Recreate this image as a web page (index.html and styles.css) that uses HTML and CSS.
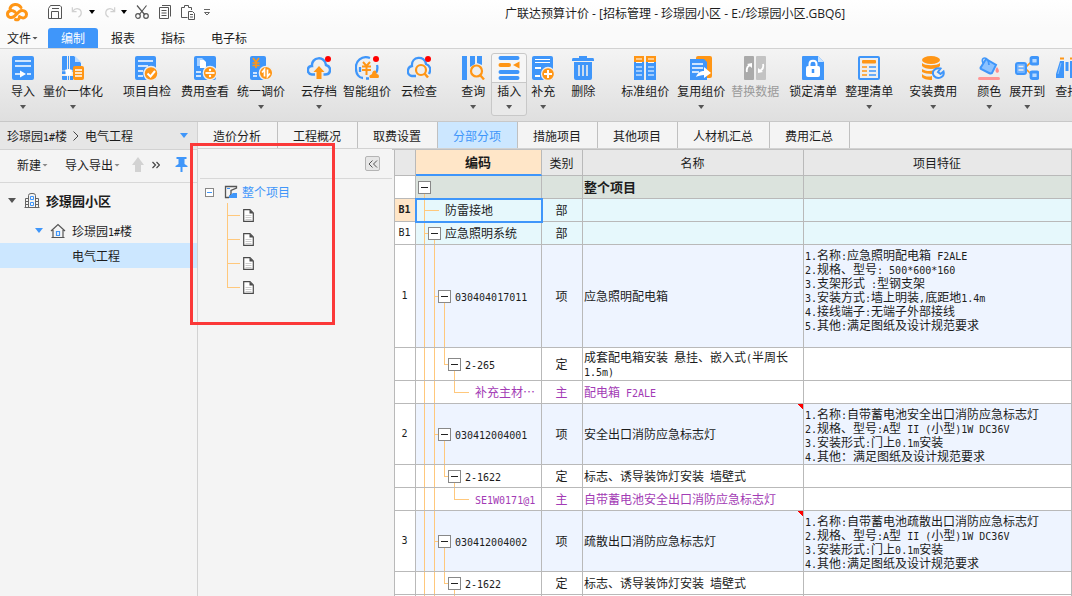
FILE: index.html
```html
<!DOCTYPE html>
<html lang="zh-CN">
<head>
<meta charset="utf-8">
<title>广联达预算计价</title>
<link rel="stylesheet" href="styles.css">
</head>
<body>
<header class="titlebar">
  <svg class="logo" viewBox="0 0 24 20" fill="none" stroke="#ff9616" stroke-width="3" stroke-linecap="round"><path d="M10 10C7 7.500 2.500 8.500 2.500 12C2.500 15.500 6.500 16.500 9 14.500L14.500 9.500C17 7.500 21.500 9 21.500 12.500C21.500 15.500 18.500 16.500 16.500 15.500M5 6.500C6.500 1.500 13 1 16 5.500M10.500 17.500C13 18.500 14.500 17 14.500 14.500"/></svg>
  <div class="quick">
    <button aria-label="保存"><svg viewBox="0 0 16 16" fill="none" stroke="#555"><path d="M1.500 4.500L3.500 1.500H13L14.500 3V14.500H1.500ZM4.500 14V7.500H11.500V14M5 4.500H12"/></svg></button>
    <button class="undo" aria-label="撤销"><svg viewBox="0 0 16 16" fill="none" stroke="#d0d0d0" stroke-width="1.300"><path d="M2.500 3V7.500H7M3 7C6 3 12 4 12 9C12 11 11 12.500 9 13.500"/></svg><i class="caret black"></i></button>
    <button class="undo" aria-label="重做"><svg viewBox="0 0 16 16" fill="none" stroke="#d0d0d0" stroke-width="1.300"><path d="M13.500 3V7.500H9M13 7C10 3 4 4 4 9C4 11 5 12.500 7 13.500"/></svg><i class="caret black"></i></button>
    <button aria-label="剪切"><svg viewBox="0 0 16 16" fill="none" stroke="#555" stroke-width="1.200"><path d="M3 1.500L11 11M12.500 1.500L5 11"/><circle cx="4" cy="12" r="2.300"/><circle cx="12" cy="12" r="2.300"/></svg></button>
    <button aria-label="复制"><svg viewBox="0 0 16 16" fill="none" stroke="#555"><path d="M5 1.500H13.500V12.500M2.500 3.500H11.500V14.500H2.500ZM4.500 6.500H9.500M4.500 9H9.500M4.500 11.500H9.500"/></svg></button>
    <button aria-label="粘贴"><svg viewBox="0 0 16 16" fill="none" stroke="#555"><path d="M7.500 13.500H1.500V3.500H4.500V1.500H8.500V3.500H11.500V6M8.500 7.500H12.500L14.500 9.500V15.500H8.500ZM10 10.500H13M10 13H13"/></svg></button>
    <button aria-label="自定义"><svg class="slim" viewBox="0 0 8 16" fill="none" stroke="#666"><path d="M1 5.500H7M1.500 8.500L4 11L6.500 8.500Z"/></svg></button>
  </div>
  <h1>广联达预算计价 - [招标管理 - 珍璟园小区 - E:/珍璟园小区.GBQ6]</h1>
</header>
<nav class="menu">
  <button class="file">文件<i class="caret tiny"></i></button>
  <button class="on">编制</button>
  <button>报表</button>
  <button>指标</button>
  <button>电子标</button>
</nav>
<div class="ribbon">
  <button class="tool first"><svg viewBox="0 0 24 24"><rect x="1" width="22" height="24" rx="2" fill="#3f96fa"/><path d="M4 5H20M4 10H20M4 18H11M16 18H20" stroke="#fff" stroke-width="1.600"/><path d="M9 14.500L15 18L9 21.500Z" fill="#fff"/></svg><span>导入</span><i class="caret"></i></button>
  <button class="tool"><svg viewBox="0 0 24 24"><path d="M1 1Q1 0 2 0H6V14H1ZM9 0H13L20 7V14H9ZM1 20H6V24H2Q1 24 1 23ZM9 20H12V24H9Z" fill="#3f96fa"/><path d="M14 0L20 6H14Z" fill="#bcdcff"/><rect x="4.500" y="13.500" width="6" height="6" fill="#fff"/><path d="M1 15H4M11 15H13M7.500 0V13M7.500 20V24" stroke="#3f96fa"/><path d="M1 15.500H4.500V18H1Z" fill="#3f96fa"/><rect x="12" y="10" width="11" height="14" rx="2" fill="#ff9616"/><path d="M14 14H21M14 17H21M14 20H21" stroke="#fff" stroke-width="1.300"/></svg><span>量价一体化</span><i class="caret"></i></button>
  <button class="tool g20"><svg viewBox="0 0 24 24"><rect y="0" width="21" height="24" rx="2" fill="#3f96fa"/><path d="M3 5H18M3 10H13M3 15H8M3 20H8" stroke="#fff" stroke-width="1.600"/><circle cx="16" cy="17.500" r="7" fill="#ff9616" stroke="#eee" stroke-width="1.500"/><path d="M12.500 17.500L15.500 20.500L20 15" stroke="#fff" stroke-width="2" fill="none"/></svg><span>项目自检</span></button>
  <button class="tool g10"><svg viewBox="0 0 24 24"><rect x="1" width="22" height="24" rx="2" fill="#3f96fa"/><path d="M4 2H9L11 4V10H4Z" fill="#a9d1ff"/><path d="M7 4H11L13 6V12H7Z" fill="#fff"/><path d="M3 16H8M3 20H8" stroke="#fff" stroke-width="1.600"/><circle cx="17" cy="17" r="6.700" fill="#ff9616" stroke="#eee" stroke-width="1.300"/><path d="M12.500 17H21.500" stroke="#fff" stroke-width="1.800"/><circle cx="17" cy="14" r="1.200" fill="#fff"/><circle cx="17" cy="20" r="1.200" fill="#fff"/></svg><span>费用查看</span></button>
  <button class="tool"><svg viewBox="0 0 24 24"><rect x="1" width="16" height="24" rx="2" fill="#3f96fa"/><path d="M4 2L7 6L10 2M7 6V12M3.500 7H10.500M3.500 9.500H10.500" stroke="#ff9616" stroke-width="1.700" fill="none"/><path d="M4 17H8M4 20H8" stroke="#fff" stroke-width="1.400"/><circle cx="17" cy="17" r="6.700" fill="#ff9616" stroke="#eee" stroke-width="1.300"/><path d="M15.500 20.500V13.500L13 16.500M18.500 13.500V20.500L21 17.500" stroke="#fff" stroke-width="1.700" fill="none"/></svg><span>统一调价</span><i class="caret"></i></button>
  <button class="tool g16"><svg viewBox="0 0 24 24"><path d="M8 18.500H5C-1 17.500 0 10 5 10C4 1 18-1 19 9C25 11 24 18.500 18 18.500H16.500" fill="none" stroke="#3f96fa" stroke-width="2.500"/><path d="M12 10L17.500 16H14.500V23H9.500V16H6.500Z" fill="#ff9616"/><circle cx="21" cy="3" r="3" fill="red"/></svg><span>云存档</span><i class="caret"></i></button>
  <button class="tool g6"><svg viewBox="0 0 24 24"><path d="M15 2C7-1 0 5 1 13C1 18 4 22 8 22M22 9C23 12 22 15 21 17M11 22.500H14M5 11V16" fill="none" stroke="#3f96fa" stroke-width="2.300"/><path d="M7 10.500H16M7 14H16M8 6L11.500 10L15 6M11.500 9V19" stroke="#ff9616" stroke-width="2" fill="none"/><path d="M15 22C13 19 16 19 17 18C18 13 22 14 21.500 18C25 18 24 22 23 22Z" fill="#ff9616"/><circle cx="21" cy="3" r="3" fill="red"/></svg><span>智能组价</span></button>
  <button class="tool g10"><svg viewBox="0 0 24 24"><path d="M9 20H5C-1 19 0 11 5 10C4 0 18-1 19 8C24 10 24 14 22 18" fill="none" stroke="#3f96fa" stroke-width="2.300"/><circle cx="14" cy="14" r="5" fill="#eee" stroke="#ff9616" stroke-width="2.200"/><path d="M17.500 17.500L21 21.500" stroke="#ff9616" stroke-width="2.500"/><circle cx="21" cy="3" r="3" fill="red"/></svg><span>云检查</span></button>
  <button class="tool g24"><svg viewBox="0 0 24 24"><path d="M1 0H6V24H1ZM9 0H14V8L9 11ZM16 0H21V9L16 7Z" fill="#3f96fa"/><circle cx="15.500" cy="15" r="5.500" fill="#eee" stroke="#ff9616" stroke-width="2.200"/><path d="M19 19L23 23.500" stroke="#ff9616" stroke-width="2.300"/></svg><span>查询</span><i class="caret"></i></button>
  <button class="tool g6 hot"><svg viewBox="0 0 24 24"><path d="M3.500 2H20.500M3.500 16H20.500M3.500 22H20.500" stroke="#3f96fa" stroke-width="4" stroke-linecap="round"/><path d="M3.500 9H12" stroke="#ff9616" stroke-width="4" stroke-linecap="round"/><path d="M16 9L22.500 5.500V12.500Z" fill="#ff9616"/></svg><span>插入</span><i class="caret"></i></button>
  <button class="tool g4"><svg viewBox="0 0 24 24"><rect x="1" width="21" height="24" rx="2" fill="#3f96fa"/><path d="M4 3.500H19M4 6.500H19" stroke="#fff"/><path d="M4 12H10M4 20H9" stroke="#fff" stroke-width="2"/><circle cx="17" cy="18" r="6.500" fill="#ff9616" stroke="#eee" stroke-width="1.300"/><path d="M13 18H21M17 14V22" stroke="#fff" stroke-width="2"/></svg><span>补充</span><i class="caret"></i></button>
  <button class="tool g16"><svg viewBox="0 0 24 24"><path d="M8 0H16V2H22Q23 2 23 4V5H1V4Q1 2 2 2H8ZM3 6H21V22Q21 24 19 24H5Q3 24 3 22Z" fill="#3f96fa"/><path d="M8 9V20M12 9V20M16 9V20" stroke="#eee" stroke-width="1.600"/></svg><span>删除</span></button>
  <button class="tool g26"><svg viewBox="0 0 24 24"><path d="M1 0H11V6H1ZM13 0H23V6H13Z" fill="#ff9616"/><path d="M1 6H11V24H1ZM13 6H23V24H13Z" fill="#3f96fa"/><path d="M3 3H9M15 3H21M3 6.500H9M15 6.500H21M3 11H9M15 11H21M3 15H9M15 15H21M3 19H9M15 19H21" stroke="#fff" stroke-width="1.200"/></svg><span>标准组价</span></button>
  <button class="tool"><svg viewBox="0 0 24 24"><rect x="7" width="16" height="22" rx="2" fill="#ff9616"/><path d="M1 3H15L18 6V24H1Z" fill="#3f96fa"/><path d="M3 8H14M3 12H14M3 16H10" stroke="#fff" stroke-width="1.400"/><path d="M7 21C9 16 12 15 15 15V11L22 17L15 22V19C12 19 9 20 7 21Z" fill="#fff"/></svg><span>复用组价</span><i class="caret"></i></button>
  <button class="tool g6" disabled><svg viewBox="0 0 24 24"><rect x="1" width="10" height="24" rx="1" fill="#aaa"/><rect x="13" width="10" height="24" rx="1" fill="#c3c3c3"/><path d="M4 16C3 12 5 10 7 9M20 8C21 12 19 14 17 15" stroke="#fff" stroke-width="1.800" fill="none"/><path d="M4 8L9 7V12ZM20 16L15 17V12Z" fill="#fff"/></svg><span>替换数据</span></button>
  <button class="tool g10"><svg viewBox="0 0 24 24"><path d="M2 0H17L23 6V24H2Q1 24 1 23V1Q1 0 2 0Z" fill="#3f96fa"/><path d="M17 0L23 6H17Z" fill="#c9e3ff"/><rect x="5" y="10" width="14" height="11" rx="2" fill="#fff"/><path d="M8.500 11V8C8.500 3.500 15.500 3.500 15.500 8V11" stroke="#fff" stroke-width="2" fill="none"/><path d="M12 13V17" stroke="#3f96fa" stroke-width="2.500"/></svg><span>锁定清单</span></button>
  <button class="tool"><svg viewBox="0 0 24 24"><rect x="2" y="1" width="20" height="22" rx="1" fill="#eee" stroke="#3f96fa" stroke-width="2"/><rect x="5" y="4" width="14" height="3.500" rx="1" fill="#ff9616"/><path d="M5 11H10M5 15H10M5 19H10" stroke="#ff9616" stroke-width="1.700"/><path d="M12 11H19M12 15H19M12 19H19" stroke="#3f96fa" stroke-width="1.700"/></svg><span>整理清单</span><i class="caret"></i></button>
  <button class="tool g16"><svg viewBox="0 0 24 24"><ellipse cx="10" cy="4" rx="9" ry="4" fill="#ff9616"/><path d="M1 7C4 10 16 10 19 7V10C16 14 4 14 1 10ZM1 13C4 15 9 16 13 14L11 18C7 18 3 17 1 16ZM1 18C4 21 8 21 11 20V24C6 24 2 23 1 21Z" fill="#ff9616"/><path d="M19.500 12.500C14 11 10 16 13 20C17 24 24 21 22.500 15.500L19.500 18L17 16Z" fill="#eee" stroke="#3f96fa" stroke-width="2"/></svg><span>安装费用</span><i class="caret"></i></button>
  <button class="tool g20"><svg viewBox="0 0 24 24"><path d="M9 3L19 9L15 17Q14 18 12 17L4 13Q3 12 4 11Z" fill="#8cc2ff" stroke="#3f96fa" stroke-width="2"/><path d="M6 7C3 1 11-1 12 9" fill="none" stroke="#3f96fa" stroke-width="1.700"/><path d="M20 11Q24 16 20 17Q17 15 20 11Z" fill="#ff8c8c"/><rect x="1" y="21" width="22" height="3" rx="1.500" fill="#ff9696"/></svg><span>颜色</span><i class="caret"></i></button>
  <button class="tool"><svg viewBox="0 0 24 24"><path d="M10 12L17 5M10 12L17 19" stroke="#ff9616" stroke-width="1.600"/><rect x="1" y="7" width="10" height="11" rx="2" fill="#70b2ff" stroke="#3f96fa" stroke-width="2"/><path d="M3.500 10.500H8.500M3.500 14H8.500" stroke="#eee" stroke-width="1.300"/><rect x="16" y="1.500" width="7" height="6.500" rx="1" fill="#b5d8ff" stroke="#3f96fa" stroke-width="2.800"/><rect x="16" y="16" width="7" height="6.500" rx="1" fill="#b5d8ff" stroke="#3f96fa" stroke-width="2.800"/></svg><span>展开到</span><i class="caret"></i></button>
  <button class="tool g10"><svg viewBox="0 0 24 24"><path d="M5 5H9V22H1V18ZM15 5H19L23 18V22H15ZM10.500 6H13.500V15H10.500Z" fill="#3f96fa"/><path d="M5 2.500H9M15 2.500H19" stroke="#ff9616" stroke-width="2"/><path d="M6 7L3 18" stroke="#8cc2ff"/></svg><span>查找</span></button>
</div>
<div class="workspace">
  <aside class="side">
    <button class="crumb"><span>珍璟园<kbd>1#</kbd>楼</span><svg viewBox="0 0 8 12" fill="none" stroke="#444"><path d="M1.500 1.500L6 6L1.500 10.500"/></svg><span>电气工程</span><i class="tri"></i></button>
    <div class="sidetools">
      <button>新建<i class="caret tiny grey"></i></button>
      <button>导入导出<i class="caret tiny grey"></i></button>
      <button aria-label="上移"><svg class="up" viewBox="0 0 12 16"><path d="M6 0L12 8H9V15H3V8H0Z" fill="#d2d2d2"/></svg></button>
      <button aria-label="更多"><svg class="more" viewBox="0 0 8 8" fill="none" stroke="#444" stroke-width="1.200"><path d="M.5 1L3.500 4L.5 7M4.500 1L7.500 4L4.500 7"/></svg></button>
      <button class="pin" aria-label="固定"><svg viewBox="0 0 12 16"><path d="M1 0H11V2H9V7L12 9V10H7V15H5V10H0V9L3 7V2H1Z" fill="#3f96fa"/></svg></button>
    </div>
    <ul class="projects">
      <li class="p1"><i class="tri dark"></i><svg viewBox="0 0 16 16" fill="none" stroke="#666"><path d="M4.500 14.500V2.500Q4.500 .5 7 .5H9Q11.500 .5 11.500 2.500V14.500M.5 14.500H15.500M1.500 14.500V5.500H4M14.500 14.500V5.500H12M1.500 8.500H4M1.500 11.500H4M12 8.500H14.500M12 11.500H14.500"/><path d="M6.500 3.500H9.500V6.500H6.500ZM6.500 9.500H9.500V12.500H6.500Z" stroke="#3f96fa"/></svg><b>珍璟园小区</b></li>
      <li class="p2"><i class="tri"></i><svg viewBox="0 0 16 16" fill="none" stroke="#555" stroke-width="1.200"><path d="M1 8L8 1.500L15 8M3 7V14.500H13V7M1.500 14.500H14.500"/><path d="M6.500 8.500H9.500V12.500H6.500Z" stroke="#3f96fa"/></svg><span>珍璟园<kbd>1#</kbd>楼</span></li>
      <li class="p3">电气工程</li>
    </ul>
  </aside>
  <main class="main">
    <nav class="tabs">
      <button>造价分析</button><button>工程概况</button><button>取费设置</button><button class="on">分部分项</button><button>措施项目</button><button>其他项目</button><button>人材机汇总</button><button>费用汇总</button>
    </nav>
    <div class="content">
      <section class="outline">
        <div class="outhead"><button aria-label="收起"><svg viewBox="0 0 10 8" fill="none" stroke="#555"><path d="M4.500 .5L1 4L4.500 7.500M9 .5L5.500 4L9 7.500"/></svg></button></div>
        <div class="root"><button class="minus" aria-label="折叠"></button><svg viewBox="0 0 14 14" fill="none"><path d="M5 12.500H1.500V1.500H12.500V3L7 5.500V9L5 12.500" stroke="#555" stroke-width="1.300"/><path d="M3 3.500H6" stroke="#3f96fa"/><path d="M5 13V11L9 8H13V13Z" fill="#3f96fa"/></svg><span>整个项目</span></div>
        <ul class="docs">
          <li><svg viewBox="0 0 11 13"><use href="#doc"/></svg></li>
          <li><svg viewBox="0 0 11 13"><use href="#doc"/></svg></li>
          <li><svg viewBox="0 0 11 13"><use href="#doc"/></svg></li>
          <li><svg viewBox="0 0 11 13"><use href="#doc"/></svg></li>
        </ul>
        <svg class="defs" width="0" height="0"><symbol id="doc" viewBox="0 0 11 13"><path d="M.7 .7H7L10.300 4V12.300H.7Z" fill="#fff" stroke="#4a4a4a" stroke-width="1.200"/><path d="M6.500 .7V4.500H10.300Z" fill="#4a4a4a"/><path d="M2.500 6.500H8.500M2.500 8.500H8.500M2.500 10.500H8.500" stroke="#ccc"/></symbol></svg>
        <div class="marker"></div>
      </section>
      <div class="gridwrap">
        <table class="grid">
          <colgroup><col class="c-no"><col class="c-code"><col class="c-kind"><col class="c-name"><col></colgroup>
          <thead><tr><th></th><th class="active">编码</th><th>类别</th><th>名称</th><th>项目特征</th></tr></thead>
          <tbody>
            <tr class="total"><td></td><td class="code"><div class="tree"><i class="b"><button aria-label="折叠"></button></i></div></td><td></td><td><b>整个项目</b></td><td></td></tr>
            <tr class="part"><td class="cur">B1</td><td class="code sel"><div class="tree"><i class="t"></i><i class="h"></i><span>防雷接地</span></div></td><td>部</td><td></td><td></td></tr>
            <tr class="part"><td>B1</td><td class="code"><div class="tree"><i class="t"></i><i class="b"><button aria-label="折叠"></button></i><span>应急照明系统</span></div></td><td>部</td><td></td><td></td></tr>
            <tr class="item tall"><td>1</td><td class="code"><div class="tree"><i class="v"></i><i class="t"></i><i class="b"><button aria-label="折叠"></button></i><span><kbd>030404017011</kbd></span></div></td><td>项</td><td>应急照明配电箱</td><td class="spec"><kbd>1.</kbd>名称<kbd>:</kbd>应急照明配电箱<kbd> F2ALE</kbd><br><kbd>2.</kbd>规格、型号<kbd>: 500*600*160</kbd><br><kbd>3.</kbd>支架形式<kbd> :</kbd>型钢支架<br><kbd>3.</kbd>安装方式<kbd>:</kbd>墙上明装<kbd>,</kbd>底距地<kbd>1.4m</kbd><br><kbd>4.</kbd>接线端子<kbd>:</kbd>无端子外部接线<br><kbd>5.</kbd>其他<kbd>:</kbd>满足图纸及设计规范要求</td></tr>
            <tr class="two"><td></td><td class="code"><div class="tree"><i class="v"></i><i class="v"></i><i class="l"></i><i class="b"><button aria-label="折叠"></button></i><span><kbd>2-265</kbd></span></div></td><td>定</td><td>成套配电箱安装<kbd> </kbd>悬挂、嵌入式<kbd>(</kbd>半周长<kbd>1.5m)</kbd></td><td></td></tr>
            <tr class="mat"><td></td><td class="code"><div class="tree"><i class="v"></i><i class="v"></i><i></i><i class="l"></i><i class="h"></i><span>补充主材…</span></div></td><td>主</td><td>配电箱<kbd> F2ALE</kbd></td><td></td></tr>
            <tr class="item mid"><td>2</td><td class="code"><div class="tree"><i class="v"></i><i class="t"></i><i class="b"><button aria-label="折叠"></button></i><span><kbd>030412004001</kbd></span></div></td><td>项</td><td class="note">安全出口消防应急标志灯</td><td class="spec"><kbd>1.</kbd>名称<kbd>:</kbd>自带蓄电池安全出口消防应急标志灯<br><kbd>2.</kbd>规格、型号<kbd>:A</kbd>型<kbd> II (</kbd>小型<kbd>)1W DC36V</kbd><br><kbd>3.</kbd>安装形式<kbd>:</kbd>门上<kbd>0.1m</kbd>安装<br><kbd>4.</kbd>其他：满足图纸及设计规范要求</td></tr>
            <tr><td></td><td class="code"><div class="tree"><i class="v"></i><i class="v"></i><i class="l"></i><i class="b"><button aria-label="折叠"></button></i><span><kbd>2-1622</kbd></span></div></td><td>定</td><td>标志、诱导装饰灯安装<kbd> </kbd>墙壁式</td><td></td></tr>
            <tr class="mat"><td></td><td class="code"><div class="tree"><i class="v"></i><i class="v"></i><i></i><i class="l"></i><i class="h"></i><span><kbd>SE1W0171@1</kbd></span></div></td><td>主</td><td>自带蓄电池安全出口消防应急标志灯</td><td></td></tr>
            <tr class="item mid"><td>3</td><td class="code"><div class="tree"><i class="v"></i><i class="t"></i><i class="b"><button aria-label="折叠"></button></i><span><kbd>030412004002</kbd></span></div></td><td>项</td><td class="note">疏散出口消防应急标志灯</td><td class="spec"><kbd>1.</kbd>名称<kbd>:</kbd>自带蓄电池疏散出口消防应急标志灯<br><kbd>2.</kbd>规格、型号<kbd>:A</kbd>型<kbd> II (</kbd>小型<kbd>)1W DC36V</kbd><br><kbd>3.</kbd>安装形式<kbd>:</kbd>门上<kbd>0.1m</kbd>安装<br><kbd>4.</kbd>其他<kbd>:</kbd>满足图纸及设计规范要求</td></tr>
            <tr><td></td><td class="code"><div class="tree"><i class="v"></i><i class="v"></i><i class="l"></i><i class="b"><button aria-label="折叠"></button></i><span><kbd>2-1622</kbd></span></div></td><td>定</td><td>标志、诱导装饰灯安装<kbd> </kbd>墙壁式</td><td></td></tr>
            <tr class="mat"><td></td><td class="code"><div class="tree"><i class="v"></i><i class="v"></i><i></i><i class="l"></i><i class="h"></i></div></td><td></td><td></td><td></td></tr>
          </tbody>
        </table>
      </div>
    </div>
  </main>
</div>
</body>
</html>
```

FILE: styles.css
```css
* { box-sizing: border-box; }
body {
  margin: 0; height: 100vh; overflow: hidden;
  display: flex; flex-direction: column;
  font: 12px/16px "Noto Sans CJK SC", sans-serif;
  color: #1c1c1c; background: #f4f4f4;
}
button { font: inherit; color: inherit; background: none; border: 0; padding: 0; margin: 0; white-space: nowrap; }
ul { list-style: none; margin: 0; padding: 0; }
i { display: block; }
svg { display: block; flex: none; }

.caret { width: 6px; height: 4px; background: #555; clip-path: polygon(0 0, 100% 0, 50% 100%); }
.caret.black { background: #000; }
.caret.tiny { width: 6px; height: 3px; }
.caret.grey { background: #888; }
.tri { width: 8px; height: 5px; background: #3f96fa; clip-path: polygon(0 0, 100% 0, 50% 100%); }
.tri.dark { background: #555; }

.titlebar { display: flex; align-items: center; height: 28px; flex: none; background: linear-gradient(#fff, #fafafa); padding: 0 0 4px 5px; }
.logo { width: 24px; height: 20px; }
.quick { display: flex; align-items: center; gap: 7px; width: 476px; padding-left: 18px; }
.quick svg { width: 16px; height: 16px; }
.quick .slim { width: 8px; }
.quick button { display: flex; align-items: center; }
.quick .undo { gap: 4px; }
.quick .undo svg { width: 15px; }
.titlebar h1 { font: 400 12px/16px "Open Sans", "Noto Sans CJK SC", sans-serif; margin: 4px 0 0; white-space: nowrap; }

.menu { display: flex; height: 20px; flex: none; background: #fafafa; padding-left: 7px; }
.menu button { display: flex; align-items: center; padding: 0 13px; }
.menu .file { padding: 0; width: 41px; gap: 1px; }
.menu .on { background: #3f96fa; color: #fff; border-radius: 3px 3px 0 0; }

.ribbon {
  display: flex; align-items: flex-start; flex: none; height: 74px; overflow: hidden;
  border-top: 1px solid #d2d2d2; border-bottom: 1px solid #c8c8c8; padding-top: 4px;
  background: linear-gradient(#f4f4f4, #dfdfdf);
}
.tool { display: flex; flex-direction: column; align-items: center; flex: none; height: 63px; padding-top: 3px; margin-left: 8px; }
.tool svg { width: 24px; height: 24px; margin-bottom: 3px; }
.tool .caret { margin-top: 6px; }
.tool.first { margin-left: 11px; }
.tool.g4 { margin-left: 4px; }
.tool.g6 { margin-left: 6px; }
.tool.g10 { margin-left: 10px; }
.tool.g16 { margin-left: 16px; }
.tool.g20 { margin-left: 20px; }
.tool.g24 { margin-left: 24px; }
.tool.g26 { margin-left: 26px; }
.tool.hot {
  border: 1px solid #c8c8c8; border-radius: 3px; padding: 2px 5px 0;
  background: linear-gradient(#f6f6f6 28px, #c8c8c8 28px, #c8c8c8 29px, #e9e9e9 29px);
}
.tool:disabled { color: #9a9a9a; }

.workspace { display: flex; flex: 1; min-height: 0; }
.side { width: 198px; flex: none; border-right: 1px solid #d2d2d2; }
.crumb { display: flex; align-items: center; width: 100%; height: 28px; padding: 0 9px 0 7px; background: #e6e6e6; border-bottom: 1px solid #d2d2d2; gap: 5px; }
.crumb svg { width: 8px; height: 12px; }
.crumb span + .tri { margin-left: auto; }
.sidetools { display: flex; align-items: center; height: 33px; border-bottom: 1px solid #d8d8d8; padding: 0 9px 2px 17px; }
.sidetools button { display: flex; align-items: center; gap: 1px; margin-right: 17px; }
.sidetools button + button { margin-right: 12px; }
.sidetools button + button + button { margin-right: 8px; }
.sidetools .up { width: 12px; height: 16px; }
.sidetools .more { width: 8px; height: 8px; }
.sidetools button.pin { margin: 0 0 0 auto; }
.pin svg { width: 13px; height: 16px; }
.projects li { display: flex; align-items: center; }
.projects svg { width: 16px; height: 16px; }
.p1 { height: 35px; padding-left: 8px; gap: 7px; font-size: 13px; }
.p2 { height: 25px; padding-left: 35px; gap: 7px; }
.projects b, .projects span { margin-left: -1px; }
.p1 svg { margin-left: 1px; }
.p3 { height: 25px; padding-left: 72px; background: #cce7ff; }

.main { display: flex; flex-direction: column; flex: 1; min-width: 0; }
.tabs { display: flex; flex: none; height: 27px; border-bottom: 1px solid #d2d2d2; }
.tabs button { padding: 2px 16px 0 15px; border-right: 1px solid #c0c0c0; }
.tabs .on { background: #cce7ff; color: #3f96fa; }
.content { display: flex; flex: 1; min-height: 0; }

.outline { position: relative; width: 194px; flex: none; }
.outhead { display: flex; justify-content: flex-end; align-items: center; height: 30px; margin: 0 0 0 2px; padding-right: 12px; border-bottom: 1px solid #d8d8d8; }
.outhead button { width: 15px; height: 15px; border: 1px solid #b4b4b4; border-radius: 2px; background: #e6e6e6; }
.outhead svg { width: 10px; height: 8px; margin: 0 auto; }
.root { display: flex; align-items: center; height: 24px; padding: 2px 0 0 7px; color: #3f96fa; }
.minus { width: 9px; height: 9px; border: 1px solid #888; background: linear-gradient(#3f96fa, #3f96fa) center / 5px 1px no-repeat #fff; }
.root svg { width: 14px; height: 14px; margin: 0 4px 0 10px; }
.docs { padding-left: 29px; }
.docs li {
  display: flex; align-items: center; height: 24px; padding-left: 16px;
  background: linear-gradient(#ffc87c, #ffc87c) 0 0 / 1px 100% no-repeat, linear-gradient(#ffc87c, #ffc87c) 0 50% / 13px 1px no-repeat;
}
.docs li:last-child { background-size: 1px 50%, 13px 1px; }
.docs svg { width: 11px; height: 13px; }
.defs { position: absolute; }
.marker { position: absolute; left: -8px; top: -6px; width: 145px; height: 182px; border: 3px solid #fb3838; pointer-events: none; z-index: 3; }

.gridwrap { flex: 1; min-width: 0; overflow: hidden; padding-left: 2px; border-top: 1px solid #c0c0c0; }
.grid { width: 100%; table-layout: fixed; border-collapse: separate; border-spacing: 0; border-left: 1px solid #b9b9b9; background: #fff; line-height: 14px; }
.c-no { width: 21px; }
.c-code { width: 126px; }
.c-kind { width: 41px; }
.c-name { width: 221px; }
.grid th, .grid td { padding: 0 2px 0 1px; border-right: 1px solid #b9b9b9; border-bottom: 1px solid #b9b9b9; }
.grid th { height: 26px; font-weight: 400; background: #e8e8e8; }
.grid th.active { background: #ffe6c8; font-weight: 700; border-bottom: 2px solid #3f96fa; }
.grid th.active, .grid b { font-size: 13px; }
.grid tr { height: 23px; }
.grid td:first-child { text-align: center; background: #fff; font: 10px/14px "DejaVu Sans Mono", monospace; }
.grid td:nth-child(3) { text-align: center; }
.grid td.cur { background: #ffe6c8; font-weight: 700; }
.grid tr.tall { height: 103px; }
.grid tr.two { height: 33px; }
.grid tr.mid { height: 61px; }
.total { background: #dbe3dd; }
.part { background: #e6f8fc; }
.item { background: #eef4ff; }
.mat { color: #a33bb5; }
.grid td.spec { vertical-align: top; padding-top: 3px; white-space: nowrap; overflow: hidden; }
kbd { font: 10px/1px "DejaVu Sans Mono", monospace; white-space: pre-wrap; }
.note { background: linear-gradient(to top right, transparent 50%, red 50%) 100% 0 / 6px 5px no-repeat; }
.grid td.code { height: 1px; padding: 0 0 0 3px; }
.grid td.sel { outline: 2px solid #3f96fa; outline-offset: -1px; }
.tree { display: flex; height: 100%; }
.tree i { width: 10px; flex: none; background-repeat: no-repeat; }
.tree span { align-self: center; margin-left: 6px; white-space: nowrap; }
.tree .v { background-image: linear-gradient(#ffc87c, #ffc87c); background-size: 1px 100%; background-position: 5px 0; }
.tree .t, .tree .l { background-image: linear-gradient(#ffc87c, #ffc87c), linear-gradient(#ffc87c, #ffc87c); background-size: 1px 100%, 5px 1px; background-position: 5px 0, 5px 50%; }
.tree .l { background-size: 1px 50%, 5px 1px; }
.tree .h { background-image: linear-gradient(#ffc87c, #ffc87c); background-size: 100% 1px; background-position: 0 50%; }
.tree .b { display: flex; align-items: center; background-image: linear-gradient(#ffc87c, #ffc87c); background-size: 1px 50%; background-position: 5px 100%; }
.tree button { width: 13px; height: 13px; flex: none; margin-left: -1px; border: 1px solid #888; background: linear-gradient(#222, #222) center / 7px 1px no-repeat #fff; }
```
